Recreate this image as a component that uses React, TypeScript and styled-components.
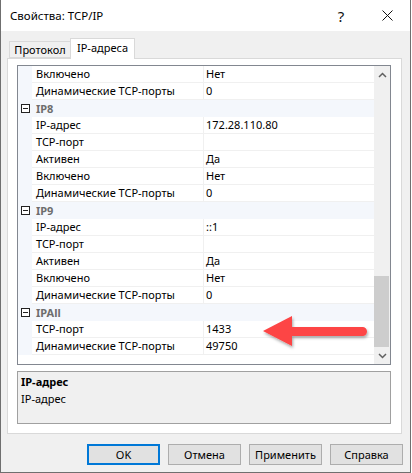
import styled, { createGlobalStyle } from 'styled-components'

const GlobalStyle = createGlobalStyle`
  html, body {
    margin: 0;
    padding: 0;
    background: #ffffff;
  }
  * {
    box-sizing: border-box;
  }
`

const Window = styled.div`
  position: relative;
  width: 411px;
  height: 473px;
  background: #f0f0f0;
  border: 1px solid #6f6f6f;
  border-top: none;
  display: flex;
  flex-direction: column;
  font-family: 'Noto Sans', 'Segoe UI', sans-serif;
  font-size: 11px;
  color: #000000;
`
const TitleBar = styled.div`
  height: 31px;
  background: #ffffff;
  display: flex;
  align-items: center;
  padding-left: 9px;
`
const Title = styled.div`
  flex: 1;
  font-size: 11.5px;
`
const CaptionButton = styled.div`
  width: 46px;
  height: 31px;
  display: flex;
  align-items: center;
  justify-content: center;
  font-size: 15px;
  color: #111;
`
const TabStrip = styled.div`
  height: 27px;
  display: flex;
  align-items: flex-end;
  padding-left: 8px;
`
const Tab = styled.div<{ $active?: boolean; $width: number }>`
  position: relative;
  width: ${(p) => p.$width}px;
  height: ${(p) => (p.$active ? '21px' : '17px')};
  margin-bottom: ${(p) => (p.$active ? '-1px' : '0')};
  display: flex;
  align-items: center;
  justify-content: center;
  background: ${(p) => (p.$active ? '#ffffff' : '#f0f0f0')};
  border: 1px solid #d9d9d9;
  border-bottom: ${(p) => (p.$active ? 'none' : '1px solid #d9d9d9')};
  border-right: ${(p) => (p.$active ? '1px solid #d9d9d9' : 'none')};
  z-index: ${(p) => (p.$active ? 2 : 1)};
  padding-bottom: ${(p) => (p.$active ? '3px' : '0')};
`
const Panel = styled.div`
  margin: 0 8px 0 6px;
  height: 376px;
  background: #ffffff;
  border: 1px solid #d9d9d9;
  padding: 6px 10px 8px 9px;
  display: flex;
  flex-direction: column;
  gap: 6px;
`
const Grid = styled.div`
  height: 300px;
  border: 1px solid #828790;
  display: flex;
  background: #ffffff;
`
const Rows = styled.div`
  flex: 1;
  display: flex;
  flex-direction: column;
`
const PropRow = styled.div`
  height: 17px;
  display: grid;
  grid-template-columns: 14px 172px 1fr;
`
const Gutter = styled.div`
  background: #f4f7fc;
  display: flex;
  align-items: center;
  justify-content: center;
`
const NameCell = styled.div`
  padding-left: 4px;
  border-right: 1px solid #f0f0f0;
  border-bottom: 1px solid #f0f0f0;
  line-height: 16px;
  white-space: nowrap;
  overflow: hidden;
`
const ValueCell = styled.div`
  padding-left: 2px;
  border-bottom: 1px solid #f0f0f0;
  line-height: 16px;
  white-space: nowrap;
`
const CategoryRow = styled.div`
  height: 17px;
  display: grid;
  grid-template-columns: 14px 1fr;
  background: #f4f7fc;
`
const CategoryName = styled.div`
  padding-left: 4px;
  font-weight: 700;
  color: #6d6d6d;
  line-height: 17px;
`
const ScrollBar = styled.div`
  width: 16px;
  background: #f0f0f0;
  display: flex;
  flex-direction: column;
`
const ScrollArrow = styled.div`
  height: 17px;
  display: flex;
  align-items: center;
  justify-content: center;
`
const ScrollTrack = styled.div`
  flex: 1;
  display: flex;
  flex-direction: column;
  justify-content: flex-end;
`
const ScrollThumb = styled.div`
  height: 71px;
  margin: 0 1px 0 0;
  background: #cdcdcd;
`
const Description = styled.div`
  height: 53px;
  background: #f0f0f0;
  border: 1px solid #a0a0a0;
  padding: 1px 3px;
  line-height: 17px;
`
const DescTitle = styled.div`
  font-weight: 700;
`
const Footer = styled.div`
  flex: 1;
  display: flex;
  justify-content: flex-end;
  align-items: flex-start;
  gap: 8px;
  padding: 10px 7px 0 0;
`
const Button = styled.div<{ $default?: boolean }>`
  width: 73px;
  height: 21px;
  display: flex;
  align-items: center;
  justify-content: center;
  background: #e1e1e1;
  border: ${(p) => (p.$default ? '2px solid #0078d7' : '1px solid #adadad')};
`
const Arrow = styled.svg`
  position: absolute;
  left: 255px;
  top: 308px;
  pointer-events: none;
`

type Row = { name: string; value?: string; category?: boolean }

const rows: Row[] = [
  { name: 'Включено', value: 'Нет' },
  { name: 'Динамические TCP-порты', value: '0' },
  { name: 'IP8', category: true },
  { name: 'IP-адрес', value: '172.28.110.80' },
  { name: 'TCP-порт', value: '' },
  { name: 'Активен', value: 'Да' },
  { name: 'Включено', value: 'Нет' },
  { name: 'Динамические TCP-порты', value: '0' },
  { name: 'IP9', category: true },
  { name: 'IP-адрес', value: '::1' },
  { name: 'TCP-порт', value: '' },
  { name: 'Активен', value: 'Да' },
  { name: 'Включено', value: 'Нет' },
  { name: 'Динамические TCP-порты', value: '0' },
  { name: 'IPAll', category: true },
  { name: 'TCP-порт', value: '1433' },
  { name: 'Динамические TCP-порты', value: '49750' },
]

const CollapseBox = () => (
  <svg width="9" height="9" viewBox="0 0 9 9">
    <rect x="0.5" y="0.5" width="8" height="8" fill="#fff" stroke="#222" />
    <line x1="2" y1="4.5" x2="7" y2="4.5" stroke="#222" />
  </svg>
)

const Chevron = ({ up }: { up?: boolean }) => (
  <svg width="9" height="6" viewBox="0 0 9 6">
    <path
      d={up ? 'M1 5 L4.5 1.5 L8 5' : 'M1 1 L4.5 4.5 L8 1'}
      fill="none"
      stroke="#606060"
      strokeWidth="1.5"
    />
  </svg>
)

const App = () => {
  return (
    <>
      <GlobalStyle />
      <Window>
        <TitleBar>
          <Title>Свойства: TCP/IP</Title>
          <CaptionButton>?</CaptionButton>
          <CaptionButton>
            <svg width="11" height="11" viewBox="0 0 11 11">
              <path d="M0.5 0.5 L10.5 10.5 M10.5 0.5 L0.5 10.5" stroke="#111" strokeWidth="1" />
            </svg>
          </CaptionButton>
        </TitleBar>
        <TabStrip>
          <Tab $width={61}>Протокол</Tab>
          <Tab $active $width={65}>
            IP-адреса
          </Tab>
        </TabStrip>
        <Panel>
          <Grid>
            <Rows>
              {rows.map((row, i) =>
                row.category ? (
                  <CategoryRow key={i}>
                    <Gutter>
                      <CollapseBox />
                    </Gutter>
                    <CategoryName>{row.name}</CategoryName>
                  </CategoryRow>
                ) : (
                  <PropRow key={i}>
                    <Gutter />
                    <NameCell>{row.name}</NameCell>
                    <ValueCell>{row.value}</ValueCell>
                  </PropRow>
                ),
              )}
            </Rows>
            <ScrollBar>
              <ScrollArrow>
                <Chevron up />
              </ScrollArrow>
              <ScrollTrack>
                <ScrollThumb />
              </ScrollTrack>
              <ScrollArrow>
                <Chevron />
              </ScrollArrow>
            </ScrollBar>
          </Grid>
          <Description>
            <DescTitle>IP-адрес</DescTitle>
            <div>IP-адрес</div>
          </Description>
        </Panel>
        <Footer>
          <Button $default>OK</Button>
          <Button>Отмена</Button>
          <Button>Применить</Button>
          <Button>Справка</Button>
        </Footer>
        <Arrow width="120" height="48" viewBox="0 0 120 48">
          <defs>
            <filter id="sh" x="-20%" y="-30%" width="140%" height="180%">
              <feDropShadow dx="1" dy="2" stdDeviation="1.5" floodColor="#000" floodOpacity="0.35" />
            </filter>
          </defs>
          <path
            d="M7 23 L36 8 L36 19 L106.5 19 A4.5 4.5 0 0 1 106.5 28 L36 28 L36 38 Z"
            fill="#fd4444"
            filter="url(#sh)"
          />
        </Arrow>
      </Window>
    </>
  )
}

export default App
